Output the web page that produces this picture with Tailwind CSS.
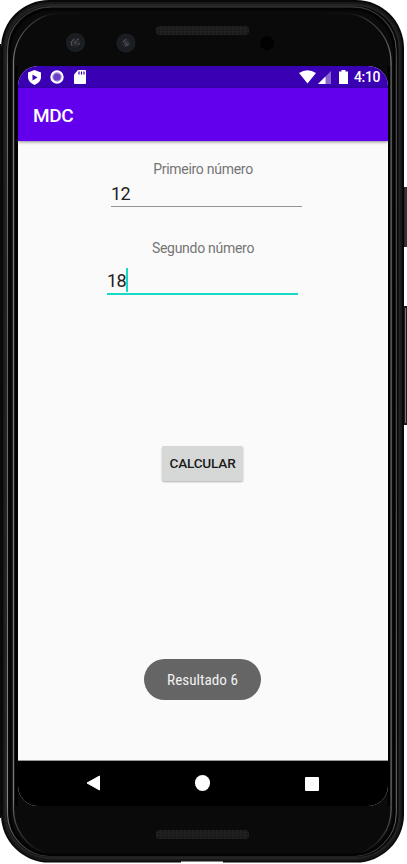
<!DOCTYPE html>
<html lang="pt-BR">
<head>
<meta charset="utf-8">
<title>MDC</title>
<script src="https://cdn.jsdelivr.net/npm/@tailwindcss/browser@4"></script>
</head>
<body class="w-[407px] h-[864px] overflow-hidden bg-white font-[Roboto,sans-serif]">
<div class="relative w-[407px] h-[864px] flex flex-col overflow-hidden">
  <!-- device frame -->
  <svg class="absolute inset-0 -z-10" width="407" height="864" viewBox="0 0 407 864" fill="none">
    <defs>
      <linearGradient id="lip" x1="0" y1="0" x2="0" y2="864" gradientUnits="userSpaceOnUse">
        <stop offset="0" stop-color="#3c3c3c"/><stop offset=".02" stop-color="#333"/><stop offset=".08" stop-color="#6a6a6c"/>
        <stop offset=".4" stop-color="#606062"/><stop offset=".93" stop-color="#858587"/><stop offset=".98" stop-color="#404040"/><stop offset="1" stop-color="#282828"/>
      </linearGradient>
      <linearGradient id="inner" x1="0" y1="12" x2="0" y2="855" gradientUnits="userSpaceOnUse">
        <stop offset="0" stop-color="#0a0a0a"/><stop offset=".008" stop-color="#303033"/><stop offset=".06" stop-color="#77777b"/>
        <stop offset=".93" stop-color="#77777b"/><stop offset=".98" stop-color="#2c2c30"/><stop offset="1" stop-color="#0a0a0a"/>
      </linearGradient>
      <linearGradient id="key" x1="403" y1="0" x2="407" y2="0" gradientUnits="userSpaceOnUse">
        <stop offset="0" stop-color="#111"/><stop offset=".7" stop-color="#3a3a3a"/><stop offset="1" stop-color="#333"/>
      </linearGradient>
      <pattern id="mesh" width="4" height="3" patternUnits="userSpaceOnUse">
        <rect width="4" height="3" fill="#191919"/><path d="M1 0v3M3 1v1" stroke="#2b2b2b" stroke-width=".8"/>
      </pattern>
      <radialGradient id="lens"><stop offset="0" stop-color="#45454c"/><stop offset=".3" stop-color="#25262b"/><stop offset=".65" stop-color="#191b1f"/><stop offset="1" stop-color="#1b2126"/></radialGradient>
    </defs>
    <rect x="402" y="187" width="6" height="60" rx="1" fill="url(#key)"/>
    <rect x="402" y="306" width="6" height="119" rx="1" fill="#1e1e1e"/>
    <path d="M405.500 308v115" stroke="#777" stroke-width="1"/>
    <path d="M49 0H356A48 48 0 0 1 404 48V815A48 48 0 0 1 356 862.500H223V861.500H181V862.500H49A48 48 0 0 1 1 815V225H0V75H1V48A48 48 0 0 1 49 0Z" fill="#080808"/>
    <rect x="0" y="44" width="1" height="774" fill="#0b0b0b"/>
    <rect x="4" y="3" width="397" height="857" rx="45" stroke="#181818" stroke-width="2"/>
    <rect x="5.500" y="5" width="394" height="853" rx="44" stroke="#232424" stroke-width="1.800"/>
    <rect x="7.500" y="7" width="388.500" height="849" rx="43" stroke="url(#lip)" stroke-width="1.400"/>
    <rect x="9.500" y="9" width="385" height="846" rx="42" fill="#0a0a0a" stroke="#030303" stroke-width="2.500"/>
    <path d="M80 12.800H62A48.500 50 0 0 0 13.500 64V807A46 46 0 0 0 46 853M326 12.800H342A49 50 0 0 1 391 64V807A46 46 0 0 1 360 853" stroke="url(#inner)" stroke-width="1.300"/>
    <path d="M16.300 66V806M389 66V806" stroke="#000" stroke-width="2.500"/>
    <rect x="156" y="26" width="93" height="9" rx="4" fill="url(#mesh)"/>
    <rect x="156" y="830" width="93" height="9" rx="4" fill="url(#mesh)"/>
    <circle cx="75.500" cy="42.500" r="9.500" fill="url(#lens)"/>
    <circle cx="126" cy="43" r="9.500" fill="url(#lens)"/>
    <g stroke="#66666d" stroke-width=".8"><path d="M72 46l-1-4 3-3M77 40l2-1M78 45l2-2"/><path d="M123 42l3-3M125 46l4-2"/></g>
    <circle cx="267" cy="43" r="7" fill="#020202"/>
  </svg>

  <main class="mt-[66px] ml-[18px] w-[370px] h-[740px] rounded-[20px] overflow-hidden bg-[#fafafa] flex flex-col">
    <header class="h-[22px] shrink-0 bg-[#3a00b3] text-white flex items-center justify-between pl-[10px] pr-2">
      <div class="flex items-center">
        <svg width="13" height="15" viewBox="0 0 13 15"><path d="M6.500 0L13 2.500V7.500Q12.500 12.500 6.500 15Q.5 12.500 0 7.500V2.500Z" fill="#fff"/><path d="M4.500 4.500v6L9.500 7.500Z" fill="#3a00b3"/></svg>
        <svg class="ml-[9px]" width="14" height="14" viewBox="0 0 14 14"><circle cx="7" cy="7" r="5.700" fill="#a88de0" stroke="#fff" stroke-width="2"/><circle cx="7" cy="7" r="3.600" fill="#6b40c6"/></svg>
        <svg class="ml-[10px]" width="12" height="14" viewBox="0 0 12 14"><path d="M4 0H11Q12 0 12 1V13Q12 14 11 14H1Q0 14 0 13V4.500Z" fill="#fff"/><path d="M5 1.500v3M7.500 1.500v3M10 1.500v3" stroke="#3a00b3" stroke-width="1.200"/></svg>
      </div>
      <div class="flex items-center">
        <svg width="17" height="14" viewBox="0 0 17 14"><path d="M0 3Q8.500-2.500 17 3L8.500 13.500Z" fill="#fff"/></svg>
        <svg class="ml-[2px]" width="13" height="13" viewBox="0 0 13 13"><path d="M13 0V13H0Z" fill="#8965d0"/><path d="M7.500 5.500V13H0Z" fill="#fff"/></svg>
        <svg class="ml-2" width="9" height="14" viewBox="0 0 9 14"><path d="M2.500 0H6.500V1.500H9V14H0V1.500H2.500Z" fill="#fff"/></svg>
        <span class="ml-[6px] w-[26px] text-[14px] leading-[22px] font-medium whitespace-nowrap tracking-[-0.35px]">4:10</span>
      </div>
    </header>
    <div class="h-[53px] shrink-0 bg-[#6200ee] shadow-[0_1px_3px_rgba(0,0,0,0.45)] flex items-center pl-[15px]">
      <h1 class="text-white text-[19px] leading-6 font-medium pt-[2px] tracking-[-0.4px]">MDC</h1>
    </div>
    <section class="flex-1 flex flex-col items-center">
      <label class="mt-[18px] h-5 text-[14px] leading-5 text-[#757575] tracking-[-0.28px]">Primeiro número</label>
      <div class="w-[191px] h-[28px] ml-[7px] border-b border-[#949494] text-[18px] leading-[30px] tracking-[-0.6px] text-[#212121]">12</div>
      <label class="mt-[31px] h-5 text-[14px] leading-5 text-[#757575] tracking-[-0.28px]">Segundo número</label>
      <div class="w-[191px] h-[37px] mr-[1px] border-b-2 border-[#14d9c5] text-[18px] tracking-[-0.6px] text-[#212121] flex items-center pt-[9px]"><span>18</span><span class="w-[2px] h-[24px] bg-[#14d9c5]"></span></div>
      <button class="mt-[151px] mr-px w-[81px] h-[35px] shrink-0 rounded-[2px] bg-[#d6d8d7] shadow-[0_1px_2px_rgba(0,0,0,0.3)] text-[13.600px] tracking-[-0.2px] font-medium text-[#1b1b1b]">CALCULAR</button>
      <div class="mt-[178px] mr-px w-[117px] h-[41px] shrink-0 rounded-full bg-[#656565] text-[#f1f1f1] text-[15.200px] flex items-center justify-center"><span class="pt-px font-['Roboto_Condensed',Roboto,sans-serif] whitespace-nowrap">Resultado 6</span></div>
    </section>
    <nav class="h-[46px] shrink-0 bg-black border-t border-[#999] flex items-center pl-[67.500px]">
      <svg class="-mt-px" width="15" height="16" viewBox="0 0 15 16"><path d="M13.500 1V15L1 8Z" fill="#fff" stroke="#fff" stroke-linejoin="round"/></svg>
      <div class="ml-[94px] -mt-px size-[15.500px] rounded-full bg-white"></div>
      <div class="ml-[95px] w-[14px] h-[14px] rounded-[1px] bg-white"></div>
    </nav>
  </main>
</div>
</body>
</html>
